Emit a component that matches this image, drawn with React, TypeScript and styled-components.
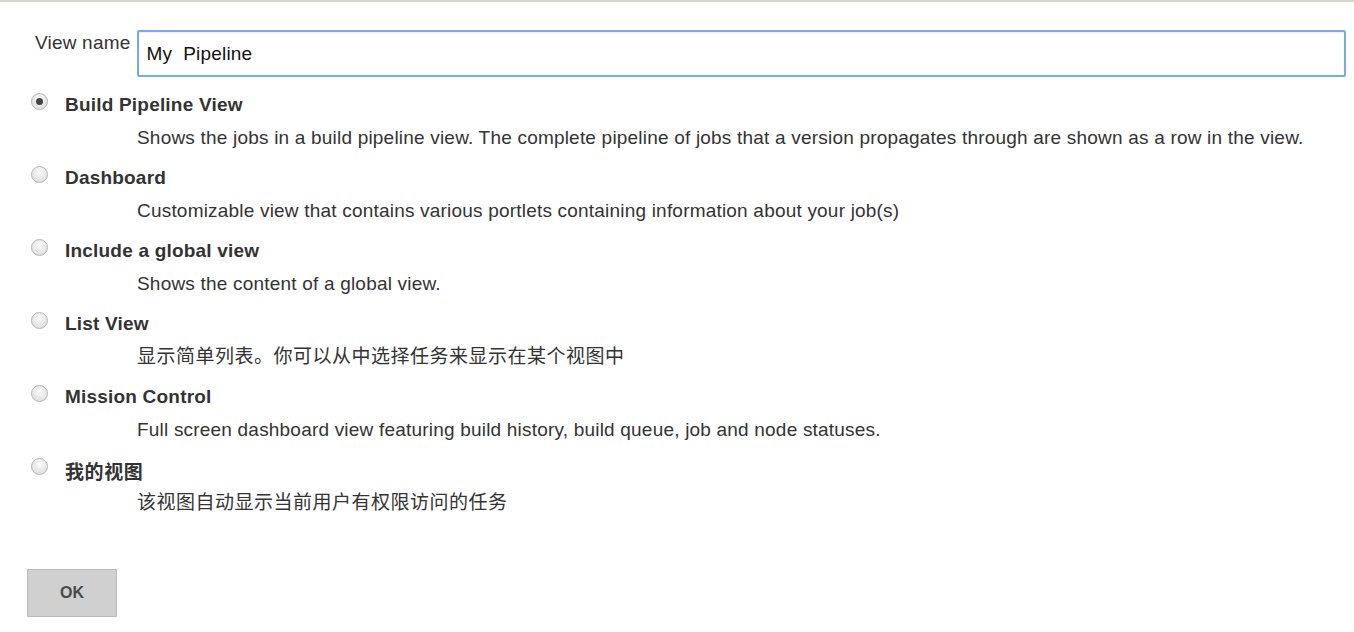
import React from "react";
import styled, { createGlobalStyle } from "styled-components";

const Global = createGlobalStyle`
  html, body { margin: 0; padding: 0; background: #fff; }
  body { font-family: "Liberation Sans", Arial, "Noto Sans CJK SC", sans-serif; color: #333; }
`;

const Page = styled.div`
  border-top: 2px solid #d6d7cc;
  padding: 28px 8px 0 27px;
  width: 1354px;
  box-sizing: border-box;
`;

const NameRow = styled.div`
  display: flex;
  align-items: flex-start;
  gap: 7px;
  padding-left: 8px;
`;

const Label = styled.label`
  font-size: 19px;
  letter-spacing: 0.2px;
  line-height: 22px;
  padding-top: 2px;
  color: #333;
`;

const NameInput = styled.input`
  flex: 1;
  height: 47px;
  box-sizing: border-box;
  border: 2px solid #7ba7ef;
  border-radius: 2px;
  padding: 0 7px;
  font-family: "Liberation Sans", Arial, sans-serif;
  font-size: 19px;
  letter-spacing: 0.2px;
  color: #111;
  outline: none;
  box-shadow: inset 0 1px 2px rgba(0,0,0,0.08);
`;

const Options = styled.div`
  display: flex;
  flex-direction: column;
  margin-top: 11px;
`;

const Option = styled.div`
  height: 73px;
  display: flex;
  flex-direction: column;
`;

const Header = styled.div`
  display: flex;
  align-items: center;
  height: 34px;
`;

const Radio = styled.span<{ $checked?: boolean }>`
  width: 15px;
  height: 15px;
  border-radius: 50%;
  border: 1px solid #b5b5b5;
  background: radial-gradient(circle at 50% 35%, #fafafa, #d8d8d8);
  margin-left: 4px;
  margin-right: 17px;
  margin-top: -7px;
  position: relative;
  flex: none;
  &::after {
    content: "";
    display: ${(p) => (p.$checked ? "block" : "none")};
    position: absolute;
    left: 4px;
    top: 4px;
    width: 7px;
    height: 7px;
    border-radius: 50%;
    background: #444;
  }
`;

const Title = styled.span<{ $cjk?: boolean }>`
  font-weight: bold;
  font-size: 19px;
  letter-spacing: ${(p) => (p.$cjk ? "0.6px" : "0.2px")};
  color: #333;
  font-family: "Liberation Sans", Arial, "Noto Sans CJK SC", sans-serif;
`;

const Desc = styled.div<{ $cjk?: boolean }>`
  padding-left: 110px;
  font-size: 19px;
  letter-spacing: ${(p) => (p.$cjk ? "0.5px" : "0.2px")};
  line-height: 32px;
  color: #333;
`;

const Button = styled.button`
  margin-top: 43px;
  width: 90px;
  height: 48px;
  background: #d0d0d0;
  border: 1px solid #b8b8b8;
  border-radius: 1px;
  font-family: "Liberation Sans", Arial, sans-serif;
  font-weight: bold;
  font-size: 16px;
  color: #4a4a4a;
  cursor: pointer;
`;

const items = [
  { title: "Build Pipeline View", desc: "Shows the jobs in a build pipeline view. The complete pipeline of jobs that a version propagates through are shown as a row in the view.", checked: true },
  { title: "Dashboard", desc: "Customizable view that contains various portlets containing information about your job(s)" },
  { title: "Include a global view", desc: "Shows the content of a global view." },
  { title: "List View", desc: "显示简单列表。你可以从中选择任务来显示在某个视图中", cjkDesc: true },
  { title: "Mission Control", desc: "Full screen dashboard view featuring build history, build queue, job and node statuses." },
  { title: "我的视图", desc: "该视图自动显示当前用户有权限访问的任务", cjkTitle: true, cjkDesc: true },
];

export default function App() {
  return (
    <>
      <Global />
      <Page>
        <NameRow>
          <Label>View name</Label>
          <NameInput defaultValue="My  Pipeline" />
        </NameRow>
        <Options>
          {items.map((it) => (
            <Option key={it.title}>
              <Header>
                <Radio $checked={it.checked} />
                <Title $cjk={it.cjkTitle}>{it.title}</Title>
              </Header>
              <Desc $cjk={it.cjkDesc}>{it.desc}</Desc>
            </Option>
          ))}
        </Options>
        <Button>OK</Button>
      </Page>
    </>
  );
}
